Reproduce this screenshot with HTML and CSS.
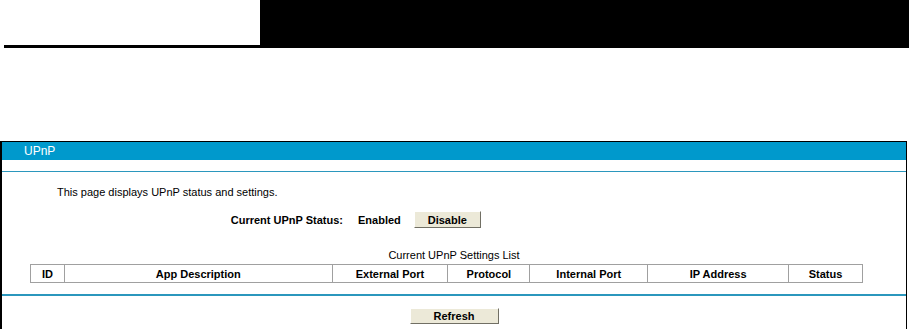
FILE: index.html
```html
<!DOCTYPE html>
<html lang="en">
<head>
    <meta charset="UTF-8">
    <title>UPnP</title>
    <link rel="stylesheet" href="styles.css">
</head>
<body>
    <div class="top">
        <div class="top-left"></div>
        <div class="top-right"></div>
    </div>

    <div class="panel">
        <div class="panel-title">UPnP</div>
        <div class="panel-gap"></div>

        <div class="panel-body">
            <p class="intro">This page displays UPnP status and settings.</p>

            <div class="status-row">
                <span class="status-label">Current UPnP Status:</span>
                <span class="status-value">Enabled</span>
                <button class="btn btn-disable">Disable</button>
            </div>

            <p class="list-title">Current UPnP Settings List</p>
            <table class="upnp-table">
                <tr>
                    <th class="col-id">ID</th>
                    <th class="col-app">App Description</th>
                    <th class="col-ext">External Port</th>
                    <th class="col-proto">Protocol</th>
                    <th class="col-int">Internal Port</th>
                    <th class="col-ip">IP Address</th>
                    <th class="col-status">Status</th>
                </tr>
            </table>
        </div>

        <div class="panel-foot">
            <button class="btn btn-refresh">Refresh</button>
        </div>
    </div>
</body>
</html>
```

FILE: styles.css
```css
:root {
    --blue: #0099cc;
    --line-blue: #2b97bd;
    --btn-bg: #ece9d8;
    --btn-dark: #716f64;
    --grid: #a0a0a0;
    --font-main: "Liberation Sans", Arial, sans-serif;
}
* { box-sizing: border-box; }
body {
    margin: 0;
    font-family: var(--font-main);
    font-size: 11px;
    color: #000;
    background: #fff;
}

/* top banner */
.top {
    display: flex;
    height: 48px;
}
.top-left {
    width: 256px;
    margin-left: 4px;
    border-bottom: 3px solid #000;
}
.top-right {
    width: 649px;
    background: #000;
}

/* panel */
.panel {
    width: 907px;
    margin-top: 93px;
    border: 1px solid #000;
    border-left-width: 2px;
}
.panel-title {
    height: 18px;
    line-height: 18px;
    padding-left: 22px;
    background: var(--blue);
    color: #fff;
    font-size: 12px;
}
.panel-gap {
    height: 12px;
    border-bottom: 1px solid var(--line-blue);
}
.panel-body {
    padding: 13px 0 11px;
    border-bottom: 2px solid var(--line-blue);
}
.intro {
    margin: 0 0 12px 55px;
    line-height: 14px;
}
.status-row {
    display: flex;
    align-items: center;
    height: 17px;
}
.status-label {
    width: 341px;
    text-align: right;
    font-weight: bold;
}
.status-value {
    margin-left: 15px;
    font-weight: bold;
}
.list-title {
    margin: 20px 0 2px;
    line-height: 14px;
    text-align: center;
}

/* buttons */
.btn {
    font-family: var(--font-main);
    font-size: 11px;
    font-weight: bold;
    color: #000;
    background: var(--btn-bg);
    border: 1px solid;
    border-color: #fff var(--btn-dark) var(--btn-dark) #fff;
    padding: 0;
    cursor: pointer;
}
.btn-disable {
    width: 67px;
    height: 17px;
    margin-left: 13px;
}
.btn-refresh {
    width: 89px;
    height: 16px;
}
.panel-foot {
    padding: 12px 0 5px;
    text-align: center;
    line-height: 0;
}

/* settings table */
.upnp-table {
    margin-left: 28px;
    width: 833px;
    border-collapse: collapse;
}
.upnp-table th {
    height: 18px;
    padding: 0;
    border: 1px solid var(--grid);
    font-weight: bold;
    text-align: center;
}
.col-id { width: 34px; }
.col-app { width: 268px; }
.col-ext { width: 116px; }
.col-proto { width: 82px; }
.col-int { width: 118px; }
.col-ip { width: 141px; }
.col-status { width: 74px; }
```
